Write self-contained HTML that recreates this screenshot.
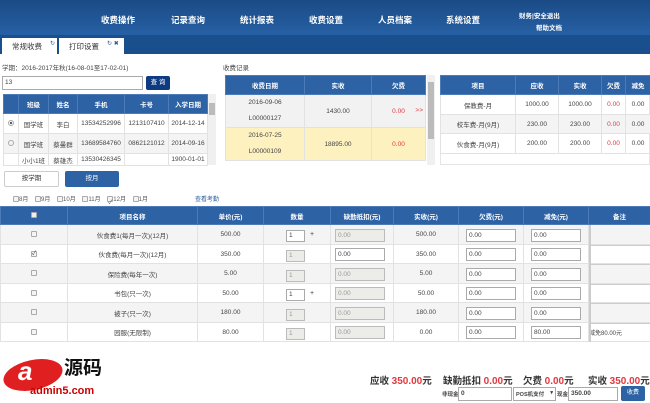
<!DOCTYPE html>
<html><head><meta charset="utf-8">
<style>
*{margin:0;padding:0;box-sizing:border-box}
body{width:650px;height:403px;overflow:hidden;background:#fff;font-family:"Liberation Sans","Noto Sans CJK SC",sans-serif;font-size:7px;color:#444;position:relative}
.a{position:absolute}
.hdr{left:0;top:0;width:650px;height:35px;background:linear-gradient(#1b4b86,#2660a4)}
.nav{color:#fff;font-size:8.5px;top:14px;font-weight:bold}
.tabbar{left:0;top:35px;width:650px;height:19px;background:#1a4f8d}
.tab{top:38px;height:17px;background:#fff;color:#333;font-size:7.5px;padding:3px 0 0 10px}
.tab span{color:#2a5a9a}
table{border-collapse:collapse;position:absolute;table-layout:fixed}
td,th{text-align:center;font-size:6.5px;border:1px solid #e2e2e2;overflow:hidden;white-space:nowrap}
th{background:#2d62a5;color:#fff;font-weight:bold;border-color:#4b7bb8}
.red{color:#e0393e}
.inp{position:absolute;border:1px solid #aaa;background:#fff;height:13px;font-size:6.5px;padding:2px 2px}
.dis{background:#ecece8;border-color:#bbb;color:#999}
.g td{background:#f4f4f4}
.cb{display:inline-block;width:6px;height:6px;border:1px solid #aaa;border-radius:1px;background:#f4f4f4;vertical-align:middle}
.rd{display:inline-block;width:6px;height:6px;border:1px solid #aaa;border-radius:50%;background:#f4f4f4}
.tot{position:absolute;top:373px;font-size:9.5px;font-weight:bold;color:#333;white-space:nowrap}
.tot b{color:#e0393e;font-size:10px}
</style></head><body>
<div class="a hdr"></div>
<div class="a nav" style="left:101px">收费操作</div>
<div class="a nav" style="left:171px">记录查询</div>
<div class="a nav" style="left:240px">统计报表</div>
<div class="a nav" style="left:309px">收费设置</div>
<div class="a nav" style="left:378px">人员档案</div>
<div class="a nav" style="left:446px">系统设置</div>
<div class="a" style="left:519px;top:10px;color:#fff;font-size:6.5px;font-weight:bold">财务|安全退出</div>
<div class="a" style="left:536px;top:22px;color:#fff;font-size:6.5px;font-weight:bold">帮助文档</div>
<div class="a tabbar"></div>
<div class="a tab" style="left:2px;width:55px">常规收费<span style="position:absolute;left:48px;top:2px;font-size:6px">↻</span></div>
<div class="a tab" style="left:59px;width:65px;padding-left:10px">打印设置<span style="position:absolute;left:48px;top:2px;font-size:6px">↻ ✖</span></div>

<div class="a" style="left:2px;top:62px;font-size:6.5px">学期：2016-2017年秋(16-08-01至17-02-01)</div>
<div class="inp" style="left:2px;top:76px;width:141px;height:14px">13</div>
<div class="a" style="left:146px;top:76px;width:24px;height:14px;background:#0e3a82;color:#fff;font-size:6.5px;text-align:center;line-height:14px;border-radius:2px">查 询</div>

<table style="left:3px;top:94px;width:204px">
<colgroup><col style="width:15px"><col style="width:30px"><col style="width:29px"><col style="width:47px"><col style="width:44px"><col style="width:39px"></colgroup>
<tr style="height:19px"><th></th><th>班级</th><th>姓名</th><th>手机</th><th>卡号</th><th>入学日期</th></tr>
<tr style="height:20px"><td><span class="rd" style="background:radial-gradient(#555 35%,#f4f4f4 45%)"></span></td><td>国学班</td><td>李白</td><td>13534252996</td><td>1213107410</td><td>2014-12-14</td></tr>
<tr class="g" style="height:20px"><td><span class="rd"></span></td><td>国学班</td><td>蔡曼群</td><td>13689584760</td><td>0862121012</td><td>2014-09-16</td></tr>
<tr style="height:12px"><td></td><td>小小1班</td><td>蔡雄杰</td><td>13530426345</td><td></td><td>1900-01-01</td></tr>
</table>
<div class="a" style="left:208px;top:94px;width:8px;height:71px;background:#f0f0f0"></div>
<div class="a" style="left:209px;top:103px;width:6px;height:12px;background:#bbb"></div>

<div class="a" style="left:4px;top:171px;width:55px;height:16px;border:1px solid #ccc;border-radius:2px;text-align:center;line-height:14px;font-size:6.5px;color:#333">按学期</div>
<div class="a" style="left:65px;top:171px;width:54px;height:16px;background:#2d62a5;border-radius:2px;text-align:center;line-height:16px;font-size:6.5px;color:#fff">按月</div>
<div class="a" style="left:13px;top:194px;font-size:6px;color:#555;word-spacing:0">
<span class="cb"></span>8月&nbsp;&nbsp;&nbsp;&nbsp;<span class="cb"></span>9月&nbsp;&nbsp;&nbsp;&nbsp;<span class="cb"></span>10月&nbsp;&nbsp;&nbsp;&nbsp;<span class="cb"></span>11月&nbsp;&nbsp;&nbsp;&nbsp;<span class="cb">✓</span>12月&nbsp;&nbsp;&nbsp;&nbsp;<span class="cb"></span>1月</div>
<div class="a" style="left:195px;top:194px;font-size:6px;color:#2d62a5">查看考勤</div>

<div class="a" style="left:223px;top:62px;font-size:6.5px">收费记录</div>
<table style="left:225px;top:75px;width:200px">
<colgroup><col style="width:79px"><col style="width:67px"><col style="width:54px"></colgroup>
<tr style="height:19px"><th>收费日期</th><th>实收</th><th>欠费</th></tr>
<tr style="height:33px"><td style="background:#f2f2f2;line-height:16px">2016-09-06<br>L00000127</td><td style="background:#f2f2f2">1430.00</td><td class="red" style="background:#f2f2f2;position:relative">0.00<span style="position:absolute;right:2px;top:12px">&gt;&gt;</span></td></tr>
<tr style="height:33px"><td style="background:#fdf1c0;line-height:16px">2016-07-25<br>L00000109</td><td style="background:#fdf1c0">18895.00</td><td class="red" style="background:#fdf1c0">0.00</td></tr>
</table>
<div class="a" style="left:427px;top:75px;width:8px;height:90px;background:#f0f0f0"></div>
<div class="a" style="left:428px;top:82px;width:6px;height:57px;background:#bbb"></div>

<div class="a" style="left:440px;top:75px;width:210px;height:90px;border:1px solid #e5e5e5"></div>
<table style="left:440px;top:75px;width:210px">
<colgroup><col style="width:75px"><col style="width:43px"><col style="width:43px"><col style="width:24px"><col style="width:25px"></colgroup>
<tr style="height:19px"><th>项目</th><th>应收</th><th>实收</th><th>欠费</th><th>减免</th></tr>
<tr style="height:20px"><td>保教费-月</td><td>1000.00</td><td>1000.00</td><td class="red">0.00</td><td>0.00</td></tr>
<tr class="g" style="height:19px"><td>校车费-月(9月)</td><td>230.00</td><td>230.00</td><td class="red">0.00</td><td>0.00</td></tr>
<tr style="height:20px"><td>伙食费-月(9月)</td><td>200.00</td><td>200.00</td><td class="red">0.00</td><td>0.00</td></tr>
</table>

<table style="left:0;top:206px;width:650px">
<colgroup><col style="width:67px"><col style="width:130px"><col style="width:66px"><col style="width:67px"><col style="width:63px"><col style="width:65px"><col style="width:65px"><col style="width:65px"><col style="width:62px"></colgroup>
<tr style="height:18px"><th><span class="cb" style="background:#eee"></span></th><th>项目名称</th><th>单价(元)</th><th>数量</th><th>缺勤抵扣(元)</th><th>实收(元)</th><th>欠费(元)</th><th>减免(元)</th><th>备注</th></tr>
<tr class="g" style="height:20px"><td><span class="cb"></span></td><td>伙食费1(每月一次)(12月)</td><td>500.00</td><td></td><td></td><td>500.00</td><td></td><td></td><td></td></tr>
<tr style="height:19px"><td><span class="cb" style="font-size:6px;line-height:4px">✓</span></td><td>伙食费(每月一次)(12月)</td><td>350.00</td><td></td><td></td><td>350.00</td><td></td><td></td><td></td></tr>
<tr class="g" style="height:20px"><td><span class="cb"></span></td><td>保险费(每年一次)</td><td>5.00</td><td></td><td></td><td>5.00</td><td></td><td></td><td></td></tr>
<tr style="height:19px"><td><span class="cb"></span></td><td>书包(只一次)</td><td>50.00</td><td></td><td></td><td>50.00</td><td></td><td></td><td></td></tr>
<tr class="g" style="height:20px"><td><span class="cb"></span></td><td>被子(只一次)</td><td>180.00</td><td></td><td></td><td>180.00</td><td></td><td></td><td></td></tr>
<tr style="height:19px"><td><span class="cb"></span></td><td>园服(无限制)</td><td>80.00</td><td></td><td></td><td>0.00</td><td></td><td></td><td style="text-align:left;font-size:6px">减免80.00元</td></tr>
</table>

<div class="inp" style="left:286px;top:230px;width:19px;height:12px;padding:1px 2px">1</div><div class="a" style="left:310px;top:231px;font-size:7px">+</div>
<div class="inp dis" style="left:286px;top:250px;width:19px;height:12px;padding:1px 2px">1</div>
<div class="inp dis" style="left:286px;top:270px;width:19px;height:12px;padding:1px 2px">1</div>
<div class="inp" style="left:286px;top:289px;width:19px;height:12px;padding:1px 2px">1</div><div class="a" style="left:310px;top:290px;font-size:7px">+</div>
<div class="inp dis" style="left:286px;top:309px;width:19px;height:12px;padding:1px 2px">1</div>
<div class="inp dis" style="left:286px;top:328px;width:19px;height:12px;padding:1px 2px">1</div>

<div class="inp dis" style="left:335px;top:229px;width:50px">0.00</div>
<div class="inp" style="left:335px;top:248px;width:50px">0.00</div>
<div class="inp dis" style="left:335px;top:268px;width:50px">0.00</div>
<div class="inp dis" style="left:335px;top:287px;width:50px">0.00</div>
<div class="inp dis" style="left:335px;top:307px;width:50px">0.00</div>
<div class="inp dis" style="left:335px;top:326px;width:50px">0.00</div>

<div class="inp" style="left:466px;top:229px;width:50px">0.00</div>
<div class="inp" style="left:466px;top:248px;width:50px">0.00</div>
<div class="inp" style="left:466px;top:268px;width:50px">0.00</div>
<div class="inp" style="left:466px;top:287px;width:50px">0.00</div>
<div class="inp" style="left:466px;top:307px;width:50px">0.00</div>
<div class="inp" style="left:466px;top:326px;width:50px">0.00</div>

<div class="inp" style="left:531px;top:229px;width:50px">0.00</div>
<div class="inp" style="left:531px;top:248px;width:50px">0.00</div>
<div class="inp" style="left:531px;top:268px;width:50px">0.00</div>
<div class="inp" style="left:531px;top:287px;width:50px">0.00</div>
<div class="inp" style="left:531px;top:307px;width:50px">0.00</div>
<div class="inp" style="left:531px;top:326px;width:50px">80.00</div>

<div class="a" style="left:589px;top:225px;width:61px;height:117px;border-left:2px solid #ccc"></div>
<div class="a" style="left:589px;top:245px;width:61px;height:1px;background:#ccc"></div>
<div class="a" style="left:589px;top:264px;width:61px;height:1px;background:#ccc"></div>
<div class="a" style="left:589px;top:284px;width:61px;height:1px;background:#ccc"></div>
<div class="a" style="left:589px;top:303px;width:61px;height:1px;background:#ccc"></div>
<div class="a" style="left:589px;top:323px;width:61px;height:1px;background:#ccc"></div>

<div class="a" style="left:3px;top:360px;width:60px;height:30px;border-radius:50%;background:#e02020;transform:rotate(-12deg)"></div>
<div class="a" style="left:18px;top:356px;font-size:26px;font-weight:bold;color:#fff;font-style:italic;line-height:30px">a<span style="color:#e02020">5</span></div>
<div class="a" style="left:64px;top:358px;font-size:19px;font-weight:bold;color:#111;line-height:22px">源码</div>
<div class="a" style="left:30px;top:384px;font-size:11px;font-weight:bold;color:#c00;line-height:14px">admin5.com</div>

<div class="tot" style="left:370px">应收 <b>350.00</b>元</div>
<div class="tot" style="left:443px">缺勤抵扣 <b>0.00</b>元</div>
<div class="tot" style="left:523px">欠费 <b>0.00</b>元</div>
<div class="tot" style="left:588px">实收 <b>350.00</b>元</div>
<div class="a" style="left:442px;top:390px;font-size:5.5px;font-weight:bold">非现金</div>
<div class="inp" style="left:458px;top:387px;width:54px;height:14px;font-weight:bold">0</div>
<div class="inp" style="left:513px;top:387px;width:43px;height:14px;font-size:5.5px;font-weight:bold">POS机支付 <span style="float:right">▾</span></div>
<div class="a" style="left:557px;top:390px;font-size:5.5px;font-weight:bold">现金</div>
<div class="inp" style="left:568px;top:387px;width:50px;height:14px;font-weight:bold">350.00</div>
<div class="a" style="left:621px;top:386px;width:24px;height:15px;background:#2d62a5;border-radius:2px;color:#fff;font-size:6px;text-align:center;line-height:15px">收费</div>
</body></html>
